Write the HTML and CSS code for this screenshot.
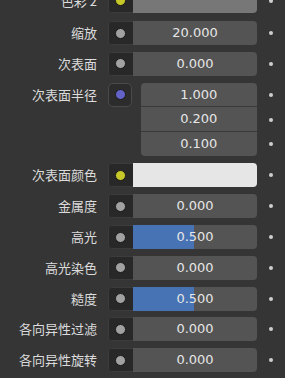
FILE: index.html
```html
<!DOCTYPE html>
<html lang="zh">
<head>
<meta charset="utf-8">
<link rel="stylesheet" href="styles.css">
</head>
<body>
<div class="panel">
  <div class="row row-top">
    <div class="label">色彩 2</div>
    <div class="field"><span class="socket"><span class="sock yellow"></span></span><span class="value swatch-grey"></span></div>
    <span class="pins"><span class="pin"></span></span>
  </div>
  <div class="row">
    <div class="label">缩放</div>
    <div class="field"><span class="socket"><span class="sock"></span></span><span class="value">20.000</span></div>
    <span class="pins"><span class="pin"></span></span>
  </div>
  <div class="row">
    <div class="label">次表面</div>
    <div class="field"><span class="socket"><span class="sock"></span></span><span class="value">0.000</span></div>
    <span class="pins"><span class="pin"></span></span>
  </div>
  <div class="row">
    <div class="label">次表面半径</div>
    <div class="field vec-field">
      <span class="socket-box"><span class="sock purple"></span></span>
      <div class="vector">
        <span class="vcell">1.000</span>
        <span class="vcell">0.200</span>
        <span class="vcell">0.100</span>
      </div>
    </div>
    <span class="pins vpins"><span class="pin"></span><span class="pin"></span><span class="pin"></span></span>
  </div>
  <div class="row">
    <div class="label">次表面颜色</div>
    <div class="field"><span class="socket"><span class="sock yellow"></span></span><span class="value swatch-white"></span></div>
    <span class="pins"><span class="pin"></span></span>
  </div>
  <div class="row">
    <div class="label">金属度</div>
    <div class="field"><span class="socket"><span class="sock"></span></span><span class="value">0.000</span></div>
    <span class="pins"><span class="pin"></span></span>
  </div>
  <div class="row">
    <div class="label">高光</div>
    <div class="field"><span class="socket"><span class="sock"></span></span><span class="value slider" style="--p:49%">0.500</span></div>
    <span class="pins"><span class="pin"></span></span>
  </div>
  <div class="row">
    <div class="label">高光染色</div>
    <div class="field"><span class="socket"><span class="sock"></span></span><span class="value">0.000</span></div>
    <span class="pins"><span class="pin"></span></span>
  </div>
  <div class="row">
    <div class="label">糙度</div>
    <div class="field"><span class="socket"><span class="sock"></span></span><span class="value slider" style="--p:49%">0.500</span></div>
    <span class="pins"><span class="pin"></span></span>
  </div>
  <div class="row">
    <div class="label">各向异性过滤</div>
    <div class="field"><span class="socket"><span class="sock"></span></span><span class="value">0.000</span></div>
    <span class="pins"><span class="pin"></span></span>
  </div>
  <div class="row">
    <div class="label">各向异性旋转</div>
    <div class="field"><span class="socket"><span class="sock"></span></span><span class="value">0.000</span></div>
    <span class="pins"><span class="pin"></span></span>
  </div>
</div>
</body>
</html>
```
FILE: styles.css
```css
html, body {
  margin: 0;
  padding: 0;
  background: #353535;
  overflow: hidden;
}
.panel {
  display: flex;
  flex-direction: column;
  gap: 6.8px;
  padding-top: 21px;
  font-family: "DejaVu Sans", "Noto Sans CJK SC", sans-serif;
  font-size: 13px;
  color: #e6e6e6;
}
.row {
  display: grid;
  grid-template-columns: 97px 149px 1fr;
  column-gap: 11px;
  align-items: start;
}
.row-top {
  margin-top: -32.3px;
  margin-bottom: 1.5px;
}
.label {
  height: 24px;
  line-height: 24px;
  text-align: right;
  white-space: nowrap;
  font-family: "Noto Sans CJK SC", "DejaVu Sans", sans-serif;
  font-size: 13px;
  color: #dcdcdc;
}
.field {
  display: flex;
  height: 24px;
  border-radius: 4px;
  overflow: hidden;
}
.socket {
  width: 25px;
  flex: none;
  background: #282828;
  display: flex;
  align-items: center;
  justify-content: center;
  box-shadow: inset 1px 0 0 #3c3c3c, inset 0 1px 0 #3c3c3c, inset 0 -1px 0 #3c3c3c;
  border-radius: 4px 0 0 4px;
}
.sock {
  display: block;
  flex: none;
  box-sizing: border-box;
  width: 11px;
  height: 11px;
  border-radius: 50%;
  background: #a1a1a1;
  border: 1px solid #1a1a1a;
}
.sock.yellow { background: #c7c729; }
.sock.purple { background: #6363c7; }
.value {
  flex: 1;
  background: #545454;
  text-align: center;
  line-height: 24px;
  white-space: nowrap;
}
.slider {
  background: linear-gradient(to right, #4772b3 var(--p), #545454 var(--p));
}
.swatch-grey { background: #777777; }
.swatch-white { background: #e6e6e6; }
.vec-field {
  height: auto;
  overflow: visible;
  gap: 8.5px;
  border-radius: 0;
}
.socket-box {
  width: 24px;
  height: 24.7px;
  box-sizing: border-box;
  flex: none;
  border: 1px solid #4a4a4a;
  background: #2c2c2c;
  border-radius: 5px;
  display: flex;
  align-items: center;
  justify-content: center;
}
.vector {
  flex: 1;
  display: flex;
  flex-direction: column;
  border-radius: 4px;
  overflow: hidden;
  background: #3a3a3a;
  gap: 1px;
}
.vcell {
  height: 23.7px;
  line-height: 24px;
  background: #545454;
  text-align: center;
}
.pins {
  display: flex;
  flex-direction: column;
  width: 28px;
  margin-left: -11px;
}
.pins .pin {
  height: 24px;
  display: flex;
  align-items: center;
  justify-content: center;
}
.vpins .pin { height: 24.7px; }
.pin::before {
  content: "";
  width: 4px;
  height: 4px;
  border-radius: 50%;
  background: #cfcfcf;
}
```
